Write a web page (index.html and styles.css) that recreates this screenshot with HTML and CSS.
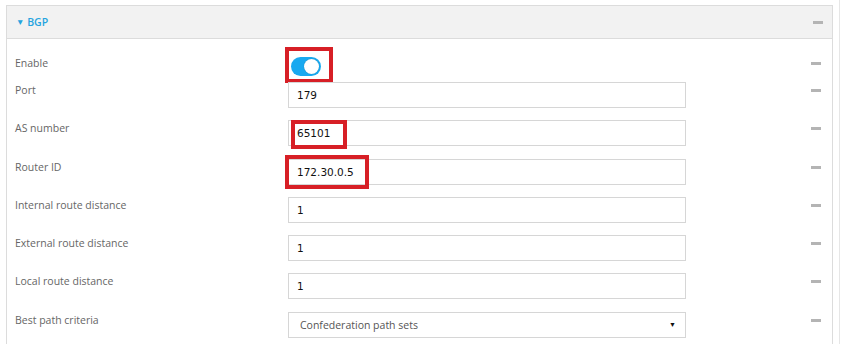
FILE: index.html
```html
<!DOCTYPE html>
<html lang="en">
<head>
    <meta charset="UTF-8">
    <title>BGP</title>
    <link rel="stylesheet" href="styles.css">
</head>
<body>
    <div class="page">
        <div class="panel">
            <div class="panel-head">
                <span class="panel-title"><span class="caret">&#9660;</span> BGP</span>
                <span class="dash"></span>
            </div>
            <div class="panel-body">
                <div class="row row-toggle">
                    <div class="label">Enable</div>
                    <div class="control">
                        <span class="toggle"><span class="knob"></span></span>
                        <span class="mark mark-enable"></span>
                    </div>
                    <span class="dash"></span>
                </div>
                <div class="row">
                    <div class="label">Port</div>
                    <div class="control"><div class="field">179</div></div>
                    <span class="dash"></span>
                </div>
                <div class="row">
                    <div class="label">AS number</div>
                    <div class="control">
                        <div class="field">65101</div>
                        <span class="mark mark-as"></span>
                    </div>
                    <span class="dash"></span>
                </div>
                <div class="row">
                    <div class="label">Router ID</div>
                    <div class="control">
                        <div class="field">172.30.0.5</div>
                        <span class="mark mark-router"></span>
                    </div>
                    <span class="dash"></span>
                </div>
                <div class="row">
                    <div class="label">Internal route distance</div>
                    <div class="control"><div class="field">1</div></div>
                    <span class="dash"></span>
                </div>
                <div class="row">
                    <div class="label">External route distance</div>
                    <div class="control"><div class="field">1</div></div>
                    <span class="dash"></span>
                </div>
                <div class="row">
                    <div class="label">Local route distance</div>
                    <div class="control"><div class="field">1</div></div>
                    <span class="dash"></span>
                </div>
                <div class="row">
                    <div class="label">Best path criteria</div>
                    <div class="control">
                        <div class="field select">Confederation path sets<span class="arrow">&#9660;</span></div>
                    </div>
                    <span class="dash"></span>
                </div>
            </div>
        </div>
    </div>
</body>
</html>
```

FILE: styles.css
```css
* {
    margin: 0;
    padding: 0;
    box-sizing: border-box;
}
body {
    font-family: 'Open Sans', 'Liberation Sans', sans-serif;
    font-size: 10.5px;
    color: #666;
    background: #fff;
    overflow: hidden;
}
.page {
    width: 840px;
    height: 344px;
    padding: 5px 0 0 6px;
    border-right: 1px solid #e6e6e6;
    overflow: hidden;
}
.panel {
    width: 827px;
    height: 339px;
    border: 1px solid #dcdcdc;
    border-bottom: none;
    overflow: hidden;
}
.panel-head {
    height: 33px;
    background: #f2f2f2;
    border-bottom: 1px solid #dcdcdc;
    display: flex;
    align-items: center;
    justify-content: space-between;
    padding: 0 9px 0 9px;
}
.panel-title {
    color: #25a4df;
    font-weight: 600;
    font-size: 10.5px;
}
.caret {
    font-size: 8.5px;
    position: relative;
    top: -1px;
}
.dash {
    width: 10px;
    height: 3px;
    background: #b4b4b4;
    flex: none;
}
.panel-body {
    padding-top: 16px;
}
.row {
    display: flex;
    height: 26px;
    margin-bottom: 12.3px;
}
.row-toggle {
    height: 27px;
    margin-bottom: 0;
}
.label {
    width: 281px;
    padding: 1px 0 0 8px;
    line-height: 14px;
}
.control {
    width: 398px;
    position: relative;
}
.row .dash {
    margin: 7px 0 0 125px;
}
.field {
    height: 26px;
    border: 1px solid #d6d6d6;
    padding: 0 8px;
    line-height: 24px;
    color: #111;
    font-family: 'DejaVu Sans', sans-serif;
    font-size: 10.5px;
}
.select {
    display: flex;
    justify-content: space-between;
    color: #555;
    font-family: 'Open Sans', 'Liberation Sans', sans-serif;
    font-size: 10.5px;
    padding: 0 9px 0 11px;
}
.arrow {
    color: #111;
    font-size: 7px;
}
.toggle {
    display: block;
    width: 30px;
    height: 19px;
    margin: 2px 0 0 3px;
    border-radius: 10px;
    background: #19a9f0;
    position: relative;
}
.knob {
    position: absolute;
    right: 2px;
    top: 2px;
    width: 15px;
    height: 15px;
    border-radius: 50%;
    background: #fff;
    box-shadow: 0 0 1px rgba(0,0,0,0.3);
}
/* annotation boxes */
.mark {
    position: absolute;
    border: 4px solid #d71f26;
}
.mark-enable {
    left: -3px;
    top: -8px;
    width: 48px;
    height: 36px;
}
.mark-as {
    left: 3px;
    top: 0;
    width: 56px;
    height: 29px;
}
.mark-router {
    left: -3px;
    top: -4px;
    width: 84px;
    height: 34px;
}
```
